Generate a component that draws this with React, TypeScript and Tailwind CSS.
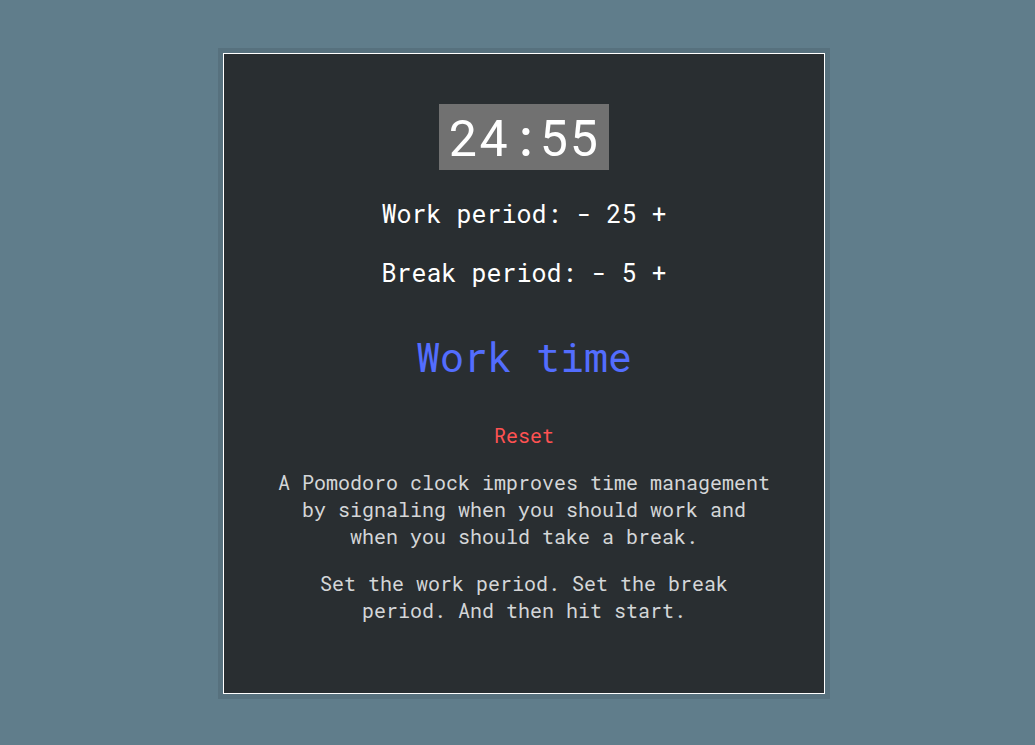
export default function App() {
  return (
    <div className="min-h-screen bg-[#607d8b] pt-12 pl-[13px] font-['Roboto_Mono','DejaVu_Sans_Mono',monospace]">
      <div className="mx-auto w-fit border-[5px] border-[#57717e]">
        <div className="w-[602px] h-[641px] border border-white bg-[#292e31] flex flex-col items-center text-center pt-[50px]">
          {/* Timer */}
          <div className="bg-[#717171] text-white text-[50px] leading-[66px] px-[10px]">24:55</div>

          {/* Period controls */}
          <div className="mt-[29px] text-white text-[25px] leading-[30px]">
            Work period: <button className="cursor-pointer">-</button> 25{" "}
            <button className="cursor-pointer">+</button>
          </div>
          <div className="mt-[29px] text-white text-[25px] leading-[30px]">
            Break period: <button className="cursor-pointer">-</button> 5{" "}
            <button className="cursor-pointer">+</button>
          </div>

          {/* Status */}
          <h1 className="mt-[45px] text-[#536dfe] text-[40px] leading-[48px]">Work time</h1>

          <button className="mt-[42px] text-[#ff5252] text-[20px] leading-[24px] cursor-pointer">Reset</button>

          {/* Description */}
          <p className="mt-[22px] w-[500px] text-[#d4d6d8] text-[20px] leading-[27px]">
            A Pomodoro clock improves time management by signaling when you should work and when you should
            take a break.
          </p>
          <p className="mt-[20px] w-[500px] text-[#d4d6d8] text-[20px] leading-[27px]">
            Set the work period. Set the break period. And then hit start.
          </p>
        </div>
      </div>
    </div>
  );
}
